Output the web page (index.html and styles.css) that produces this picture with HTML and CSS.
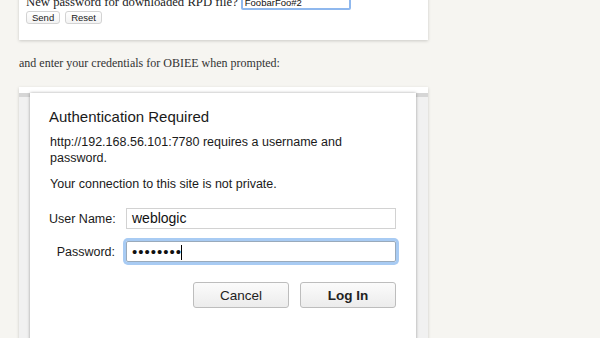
FILE: index.html
```html
<!DOCTYPE html>
<html lang="en">
<head>
  <meta charset="UTF-8" />
  <meta name="viewport" content="width=device-width, initial-scale=1.0" />
  <title>OBIEE RPD download</title>
  <link rel="stylesheet" href="styles.css">
</head>
<body>
  <div class="page">
    <div class="card form-card">
      <div class="form-row">
        <span class="prompt">New password for downloaded RPD file?</span>
        <input type="text" class="rpd-pass" value="FoobarFoo#2" />
      </div>
      <div class="form-buttons">
        <button class="small-btn">Send</button>
        <button class="small-btn">Reset</button>
      </div>
    </div>

    <p class="text">and enter your credentials for OBIEE when prompted:</p>

    <div class="card shot">
      <div class="screen">
        <div class="dialog">
          <h2>Authentication Required</h2>
          <p class="msg">http://192.168.56.101:7780 requires a username and<br />password.</p>
          <p class="msg second">Your connection to this site is not private.</p>

          <div class="field">
            <label for="user">User Name:</label>
            <div class="box">weblogic</div>
          </div>
          <div class="field">
            <label for="pass">Password:</label>
            <div class="box focused"><span class="dots">&bull;&bull;&bull;&bull;&bull;&bull;&bull;&bull;</span><span class="caret"></span></div>
          </div>

          <div class="actions">
            <button class="mac-btn">Cancel</button>
            <button class="mac-btn default">Log In</button>
          </div>
        </div>
      </div>
    </div>
  </div>
</body>
</html>
```

FILE: styles.css
```css
body {
  margin: 0;
  background-color: #f6f5f1;
  font-family: "Liberation Serif", serif;
  color: #333;
  overflow: hidden;
}
.page {
  width: 409px;
  margin-left: 19px;
}
.card {
  background-color: #fff;
  box-shadow: 0 1px 3px rgba(0, 0, 0, 0.18);
}
.form-card {
  margin-top: -12px;
  padding: 6px 7px 16px;
}
.form-row {
  display: flex;
  align-items: center;
  height: 16px;
  gap: 3px;
}
.prompt {
  font-size: 12.7px;
  color: #222;
}
.rpd-pass {
  width: 102px;
  height: 12px;
  padding: 0 2px;
  border: 2px solid #8fb8ee;
  border-radius: 2px;
  font-family: "Liberation Sans", sans-serif;
  font-size: 9.5px;
  color: #111;
}
.form-buttons {
  display: flex;
  gap: 5px;
  margin-top: 1px;
}
.small-btn {
  height: 13px;
  padding: 0 5px;
  border: 1px solid #d3d3d3;
  border-radius: 3px;
  background: linear-gradient(#fff, #f3f3f3);
  font-family: "Liberation Sans", sans-serif;
  font-size: 9.5px;
  line-height: 11px;
  color: #222;
}
.text {
  margin: 15px 0 16px;
  font-size: 12px;
  line-height: 16px;
  color: #333;
}
.shot {
  padding-top: 6px;
  height: 300px;
}
.screen {
  height: 100%;
  padding: 0 12px 0 11px;
  background: linear-gradient(#d6d6d6 0, #d6d6d6 4px, #f1f1f1 4px);
}
.dialog {
  height: 100%;
  padding: 15px 20px 0 19px;
  background-color: #fff;
  box-shadow: 0 0 3px rgba(0, 0, 0, 0.35);
  font-family: "Liberation Sans", sans-serif;
  color: #1a1a1a;
  box-sizing: border-box;
}
.dialog h2 {
  margin: 0;
  font-size: 15px;
  font-weight: normal;
  line-height: 18px;
}
.msg {
  margin: 8px 0 0 1px;
  font-size: 12.5px;
  line-height: 16px;
}
.msg.second {
  margin-top: 10px;
}
.field {
  display: flex;
  align-items: center;
  margin-top: 12px;
}
.msg.second + .field {
  margin-top: 16px;
}
.field label {
  flex: none;
  width: 66px;
  margin-right: 11px;
  text-align: right;
  white-space: nowrap;
  font-size: 12.5px;
}
.box {
  flex: none;
  width: 270px;
  height: 21px;
  padding: 0 5px;
  border: 1px solid #d2d2d2;
  box-sizing: border-box;
  font-size: 14px;
  line-height: 19px;
  color: #111;
}
.box.focused {
  border-color: #9ab;
  box-shadow: 0 0 0 3px #a8cbf3;
  border-radius: 2px;
}
.dots {
  font-size: 15px;
  letter-spacing: 1px;
}
.caret {
  display: inline-block;
  width: 1px;
  height: 15px;
  margin-left: -1px;
  vertical-align: -3px;
  background-color: #000;
}
.actions {
  display: flex;
  justify-content: flex-end;
  gap: 11px;
  margin-top: 20px;
  width: 347px;
}
.mac-btn {
  width: 96px;
  height: 26px;
  border: 1px solid #bdbdbd;
  border-radius: 3px;
  background: linear-gradient(#fbfbfb, #ececec);
  font-family: "Liberation Sans", sans-serif;
  font-size: 13.5px;
  color: #222;
}
.mac-btn.default {
  font-weight: bold;
}
```
